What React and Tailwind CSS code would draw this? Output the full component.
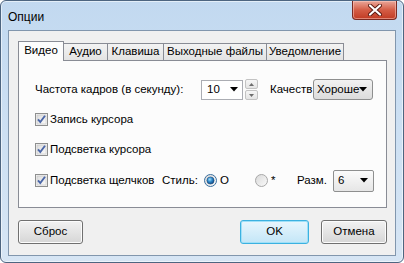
import React from "react";

const font = { fontFamily: '"Liberation Sans", Arial, sans-serif' };

function Arrow() {
  return (
    <svg width="8" height="5" viewBox="0 0 8 5" className="shrink-0">
      <path d="M0 0 H8 L4 4.5 Z" fill="#000" />
    </svg>
  );
}

function Check() {
  return (
    <svg width="13" height="13" viewBox="0 0 13 13" className="shrink-0">
      <defs>
        <linearGradient id="cbg" x1="0" y1="0" x2="1" y2="1">
          <stop offset="0" stopColor="#dcdcdc" />
          <stop offset="1" stopColor="#fbfbfb" />
        </linearGradient>
      </defs>
      <rect x="0.5" y="0.5" width="12" height="12" fill="#f4f4f4" stroke="#8e8f8f" />
      <rect x="2" y="2" width="9" height="9" fill="url(#cbg)" stroke="#c2c2c2" strokeWidth="0.6" />
      <path d="M3 6.3 L5.3 9 L10 2.8" fill="none" stroke="#4a66a8" strokeWidth="1.9" strokeLinejoin="miter" />
    </svg>
  );
}

function Radio({ on }) {
  return (
    <svg width="13" height="13" viewBox="0 0 13 13" className="shrink-0">
      <defs>
        <radialGradient id="rdot" cx="0.4" cy="0.35" r="0.7">
          <stop offset="0" stopColor="#9fe0ff" />
          <stop offset="0.5" stopColor="#2b85c7" />
          <stop offset="1" stopColor="#0f3f78" />
        </radialGradient>
        <linearGradient id="rbg" x1="0" y1="0" x2="1" y2="1">
          <stop offset="0" stopColor="#d8d8d8" />
          <stop offset="1" stopColor="#fbfbfb" />
        </linearGradient>
      </defs>
      <circle cx="6.5" cy="6.5" r="6" fill="url(#rbg)" stroke={on ? "#3a6f9e" : "#a8a8a8"} />
      {on && <circle cx="6.5" cy="6.5" r="3.6" fill="url(#rdot)" stroke="#1c4a7a" strokeWidth="0.6" />}
    </svg>
  );
}

function Spinner() {
  return (
    <div className="flex flex-col w-[13px] h-[21px] gap-px">
      <div className="flex-1 border border-[#c3c3c3] rounded-[2px] bg-gradient-to-b from-[#f6f6f6] to-[#e4e4e4] flex items-center justify-center">
        <svg width="5" height="3" viewBox="0 0 5 3"><path d="M0 3 L2.5 0 L5 3 Z" fill="#6d6d6d" /></svg>
      </div>
      <div className="flex-1 border border-[#c3c3c3] rounded-[2px] bg-gradient-to-b from-[#f6f6f6] to-[#e4e4e4] flex items-center justify-center">
        <svg width="5" height="3" viewBox="0 0 5 3"><path d="M0 0 L5 0 L2.5 3 Z" fill="#6d6d6d" /></svg>
      </div>
    </div>
  );
}

function Tab({ label, w, active }) {
  if (active) {
    return (
      <div
        className={`${w} h-[20px] -mb-px relative z-10 border border-b-0 border-[#898c95] bg-[#fcfcfc] flex items-center justify-center text-[11.5px] text-black pb-[1px] whitespace-nowrap`}
      >
        {label}
      </div>
    );
  }
  return (
    <div
      className={`${w} h-[17px] -ml-px border border-b-0 border-[#898c95] bg-gradient-to-b from-[#f3f3f3] to-[#e3e3e3] flex items-center justify-center text-[11.5px] text-black whitespace-nowrap`}
    >
      {label}
    </div>
  );
}

function Btn({ label, w, def }) {
  return (
    <div
      className={`${w} h-[24px] rounded-[3px] border flex items-center justify-center text-[11.5px] text-black ${
        def
          ? "border-[#3cb1e0] bg-gradient-to-b from-[#e8f6fd] to-[#c3e6f7] shadow-[inset_0_0_0_1px_#9fe0f8]"
          : "border-[#707070] bg-gradient-to-b from-[#f2f2f2] to-[#d6d6d6] shadow-[inset_0_0_0_1px_#fcfcfc]"
      }`}
    >
      {label}
    </div>
  );
}

export default function App() {
  return (
    <div
      style={font}
      className="w-[404px] h-[263px] rounded-[6px] border border-[#4d6580] bg-gradient-to-b from-[#c2d9f0] via-[#cde0f3] to-[#d6e5f4] shadow-[inset_0_0_0_1px_rgba(255,255,255,0.55)] flex flex-col overflow-hidden"
    >
      <div className="h-[29px] flex items-start justify-between">
        <div className="pl-[7px] pt-[7px] text-[12px] text-black">Опции</div>
        <div className="mr-[6px] w-[45px] h-[19px] rounded-b-[4px] border border-t-0 border-[#7a2a22] bg-gradient-to-b from-[#e8a699] via-[#d45c45] to-[#c13a22] flex items-center justify-center shadow-[inset_0_0_0_1px_rgba(255,210,200,0.5)]">
          <svg width="14" height="12" viewBox="0 0 14 12">
            <path d="M2 1.5 L12 10.5 M12 1.5 L2 10.5" stroke="#5a1a12" strokeWidth="4" strokeLinecap="round" />
            <path d="M2 1.5 L12 10.5 M12 1.5 L2 10.5" stroke="#fff" strokeWidth="2.2" strokeLinecap="round" />
          </svg>
        </div>
      </div>

      <div className="mx-[7px] h-[226px] border border-[#8196ad] bg-[#f0f0f0] pt-[10px] pl-[9px] pr-[8px] flex flex-col">
        <div className="h-[19px] flex items-end">
          <Tab label="Видео" w="w-[46px]" active />
          <Tab label="Аудио" w="w-[45px]" />
          <Tab label="Клавиша" w="w-[57px]" />
          <Tab label="Выходные файлы" w="w-[104px]" />
          <Tab label="Уведомление" w="w-[78px]" />
        </div>

        <div className="h-[148px] border border-[#898c95] bg-[#fcfcfc] pl-[16px] flex flex-col text-[11.5px] text-black">
          <div className="mt-[18px] h-[21px] flex items-center">
            <div className="w-[166px] whitespace-nowrap">Частота кадров (в секунду):</div>
            <div className="w-[42px] h-[20px] border border-[#abadb3] bg-white flex items-center justify-between pl-[5px] pr-[4px]">
              <span>10</span>
              <Arrow />
            </div>
            <div className="ml-[2px]">
              <Spinner />
            </div>
            <div className="ml-[12px] w-[43px] whitespace-nowrap">Качеств</div>
            <div className="w-[60px] h-[21px] rounded-[3px] border border-[#8e8f8f] bg-gradient-to-b from-[#f2f2f2] to-[#dcdcdc] flex items-center justify-between pl-[3px] pr-[5px]">
              <span>Хороше</span>
              <Arrow />
            </div>
          </div>

          <div className="mt-[9px] h-[21px] flex items-center gap-[2px]">
            <Check />
            <span>Запись курсора</span>
          </div>
          <div className="mt-[9px] h-[21px] flex items-center gap-[2px]">
            <Check />
            <span>Подсветка курсора</span>
          </div>
          <div className="mt-[10px] h-[21px] flex items-center">
            <div className="w-[127px] flex items-center gap-[2px] whitespace-nowrap">
              <Check />
              <span>Подсветка щелчков</span>
            </div>
            <div className="w-[42px]">Стиль:</div>
            <div className="w-[51px] flex items-center gap-[3px]">
              <Radio on />
              <span>O</span>
            </div>
            <div className="w-[42px] flex items-center gap-[3px]">
              <Radio />
              <span>*</span>
            </div>
            <div className="w-[36px]">Разм.</div>
            <div className="w-[41px] h-[22px] rounded-[2px] border border-[#8e8f8f] bg-gradient-to-b from-[#fbfbfb] to-[#e6e6e6] flex items-center justify-between pl-[4px] pr-[5px]">
              <span>6</span>
              <Arrow />
            </div>
          </div>
        </div>

        <div className="mt-[12px] flex items-center">
          <Btn label="Сброс" w="w-[65px]" />
          <div className="flex-1" />
          <Btn label="OK" w="w-[69px]" def />
          <div className="w-[12px]" />
          <Btn label="Отмена" w="w-[66px]" />
        </div>
      </div>
    </div>
  );
}
